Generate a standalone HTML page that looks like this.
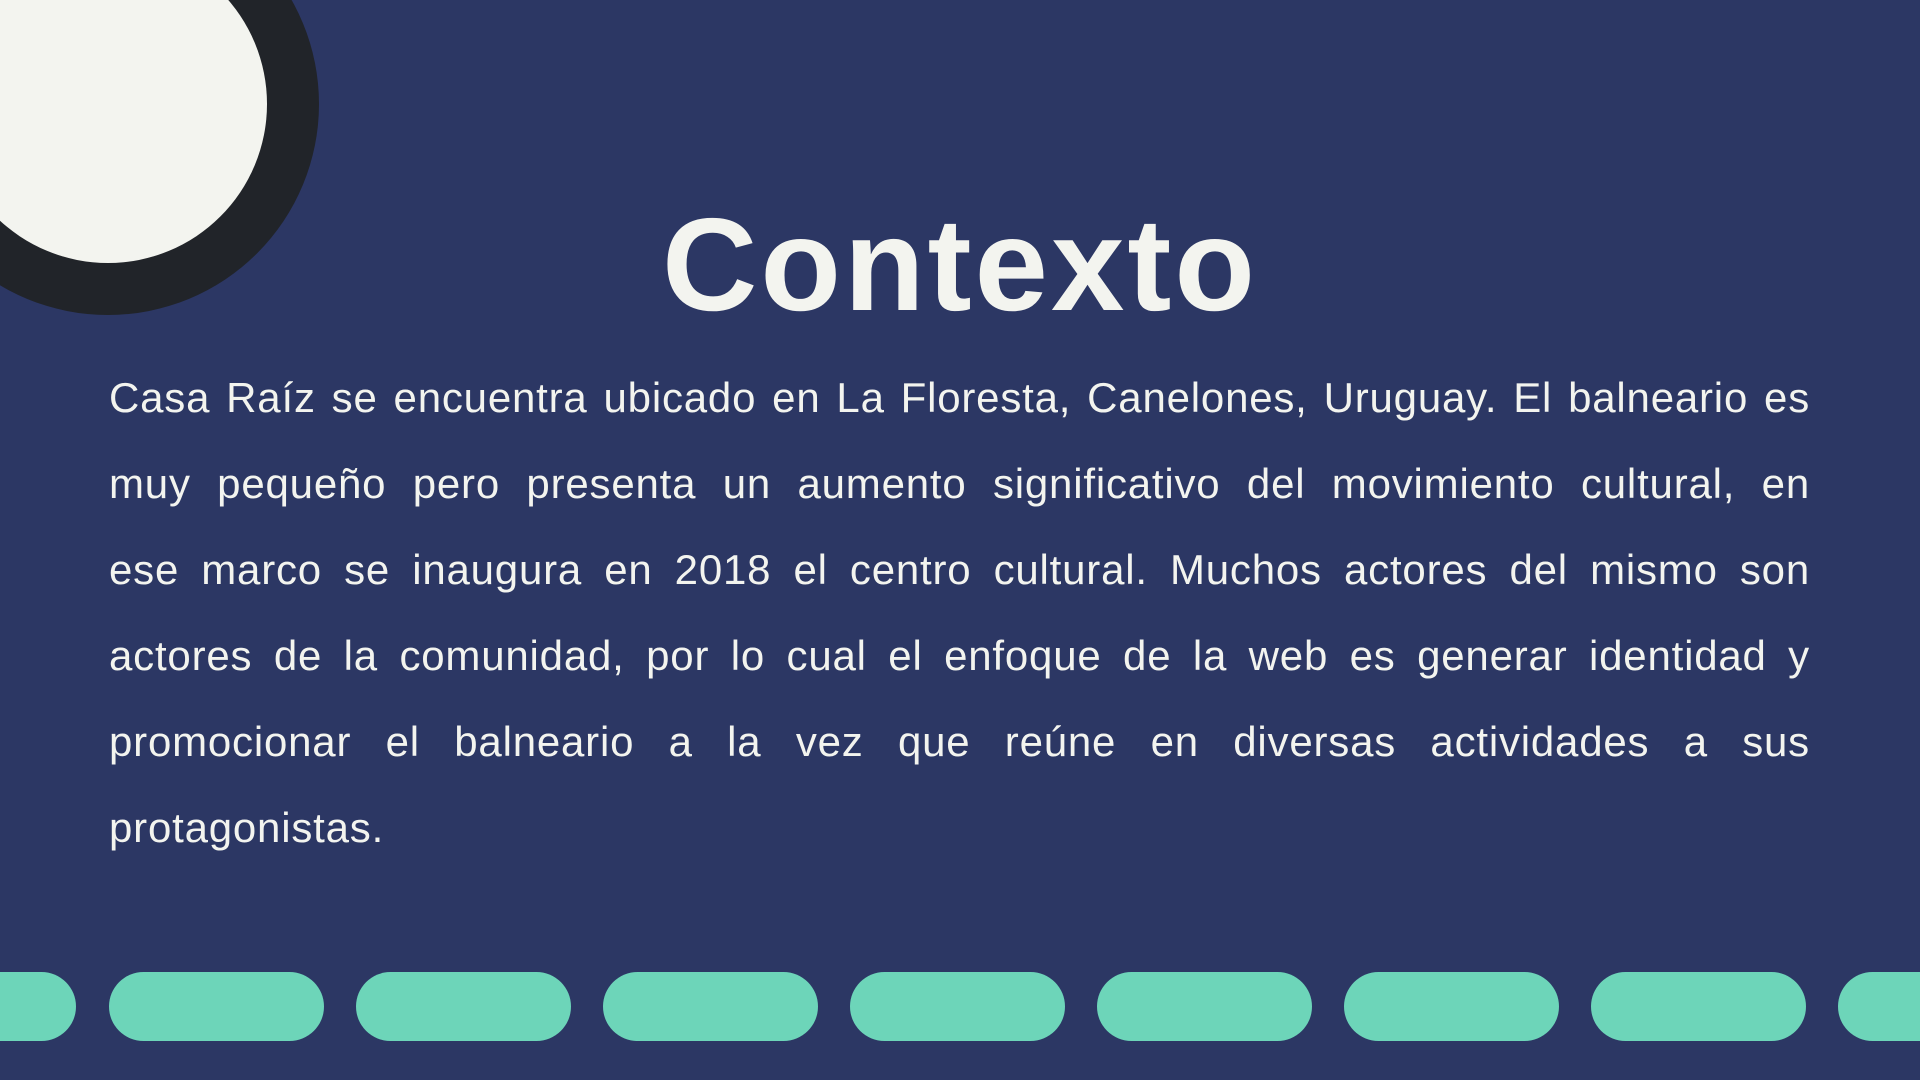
<!DOCTYPE html>
<html><head><meta charset="utf-8"><style>
html,body{margin:0;padding:0}
body{width:1920px;height:1080px;background:#2c3764;position:relative;overflow:hidden;font-family:"Liberation Sans",sans-serif}
.ring{position:absolute;left:-103px;top:-107px;width:422px;height:422px;border-radius:50%;background:#212429}
.dot{position:absolute;left:-51px;top:-55px;width:318px;height:318px;border-radius:50%;background:#f3f4ef}
h1{position:absolute;left:0;width:1920px;top:190px;margin:0;text-align:center;color:#f3f4ef;font-size:132px;font-weight:bold;letter-spacing:3px;line-height:150px}
.p{position:absolute;left:109px;width:1701px;top:368px;color:#f3f4ef;font-size:42px;letter-spacing:0.8px}
.l{height:86px;line-height:60px;text-align:justify;text-align-last:justify;white-space:nowrap;overflow:visible}
.l.last{text-align-last:left}
.pill{position:absolute;top:972px;width:215px;height:69px;border-radius:35px;background:#6dd5b9}
</style></head><body>
<div class="ring"></div><div class="dot"></div>
<h1>Contexto</h1>
<div class="p">
<div class="l" style="white-space:normal">Casa Raíz se encuentra ubicado en La Floresta, Canelones, Uruguay. El balneario es</div>
<div class="l" style="white-space:normal">muy pequeño pero presenta un aumento significativo del movimiento cultural, en</div>
<div class="l" style="white-space:normal">ese marco se inaugura en 2018 el centro cultural. Muchos actores del mismo son</div>
<div class="l" style="white-space:normal">actores de la comunidad, por lo cual el enfoque de la web es generar identidad y</div>
<div class="l" style="white-space:normal">promocionar el balneario a la vez que reúne en diversas actividades a sus</div>
<div class="l last">protagonistas.</div>
</div>
<div class="pill" style="left:-139px"></div>
<div class="pill" style="left:109px"></div>
<div class="pill" style="left:356px"></div>
<div class="pill" style="left:603px"></div>
<div class="pill" style="left:850px"></div>
<div class="pill" style="left:1097px"></div>
<div class="pill" style="left:1344px"></div>
<div class="pill" style="left:1591px"></div>
<div class="pill" style="left:1838px"></div>
</body></html>
